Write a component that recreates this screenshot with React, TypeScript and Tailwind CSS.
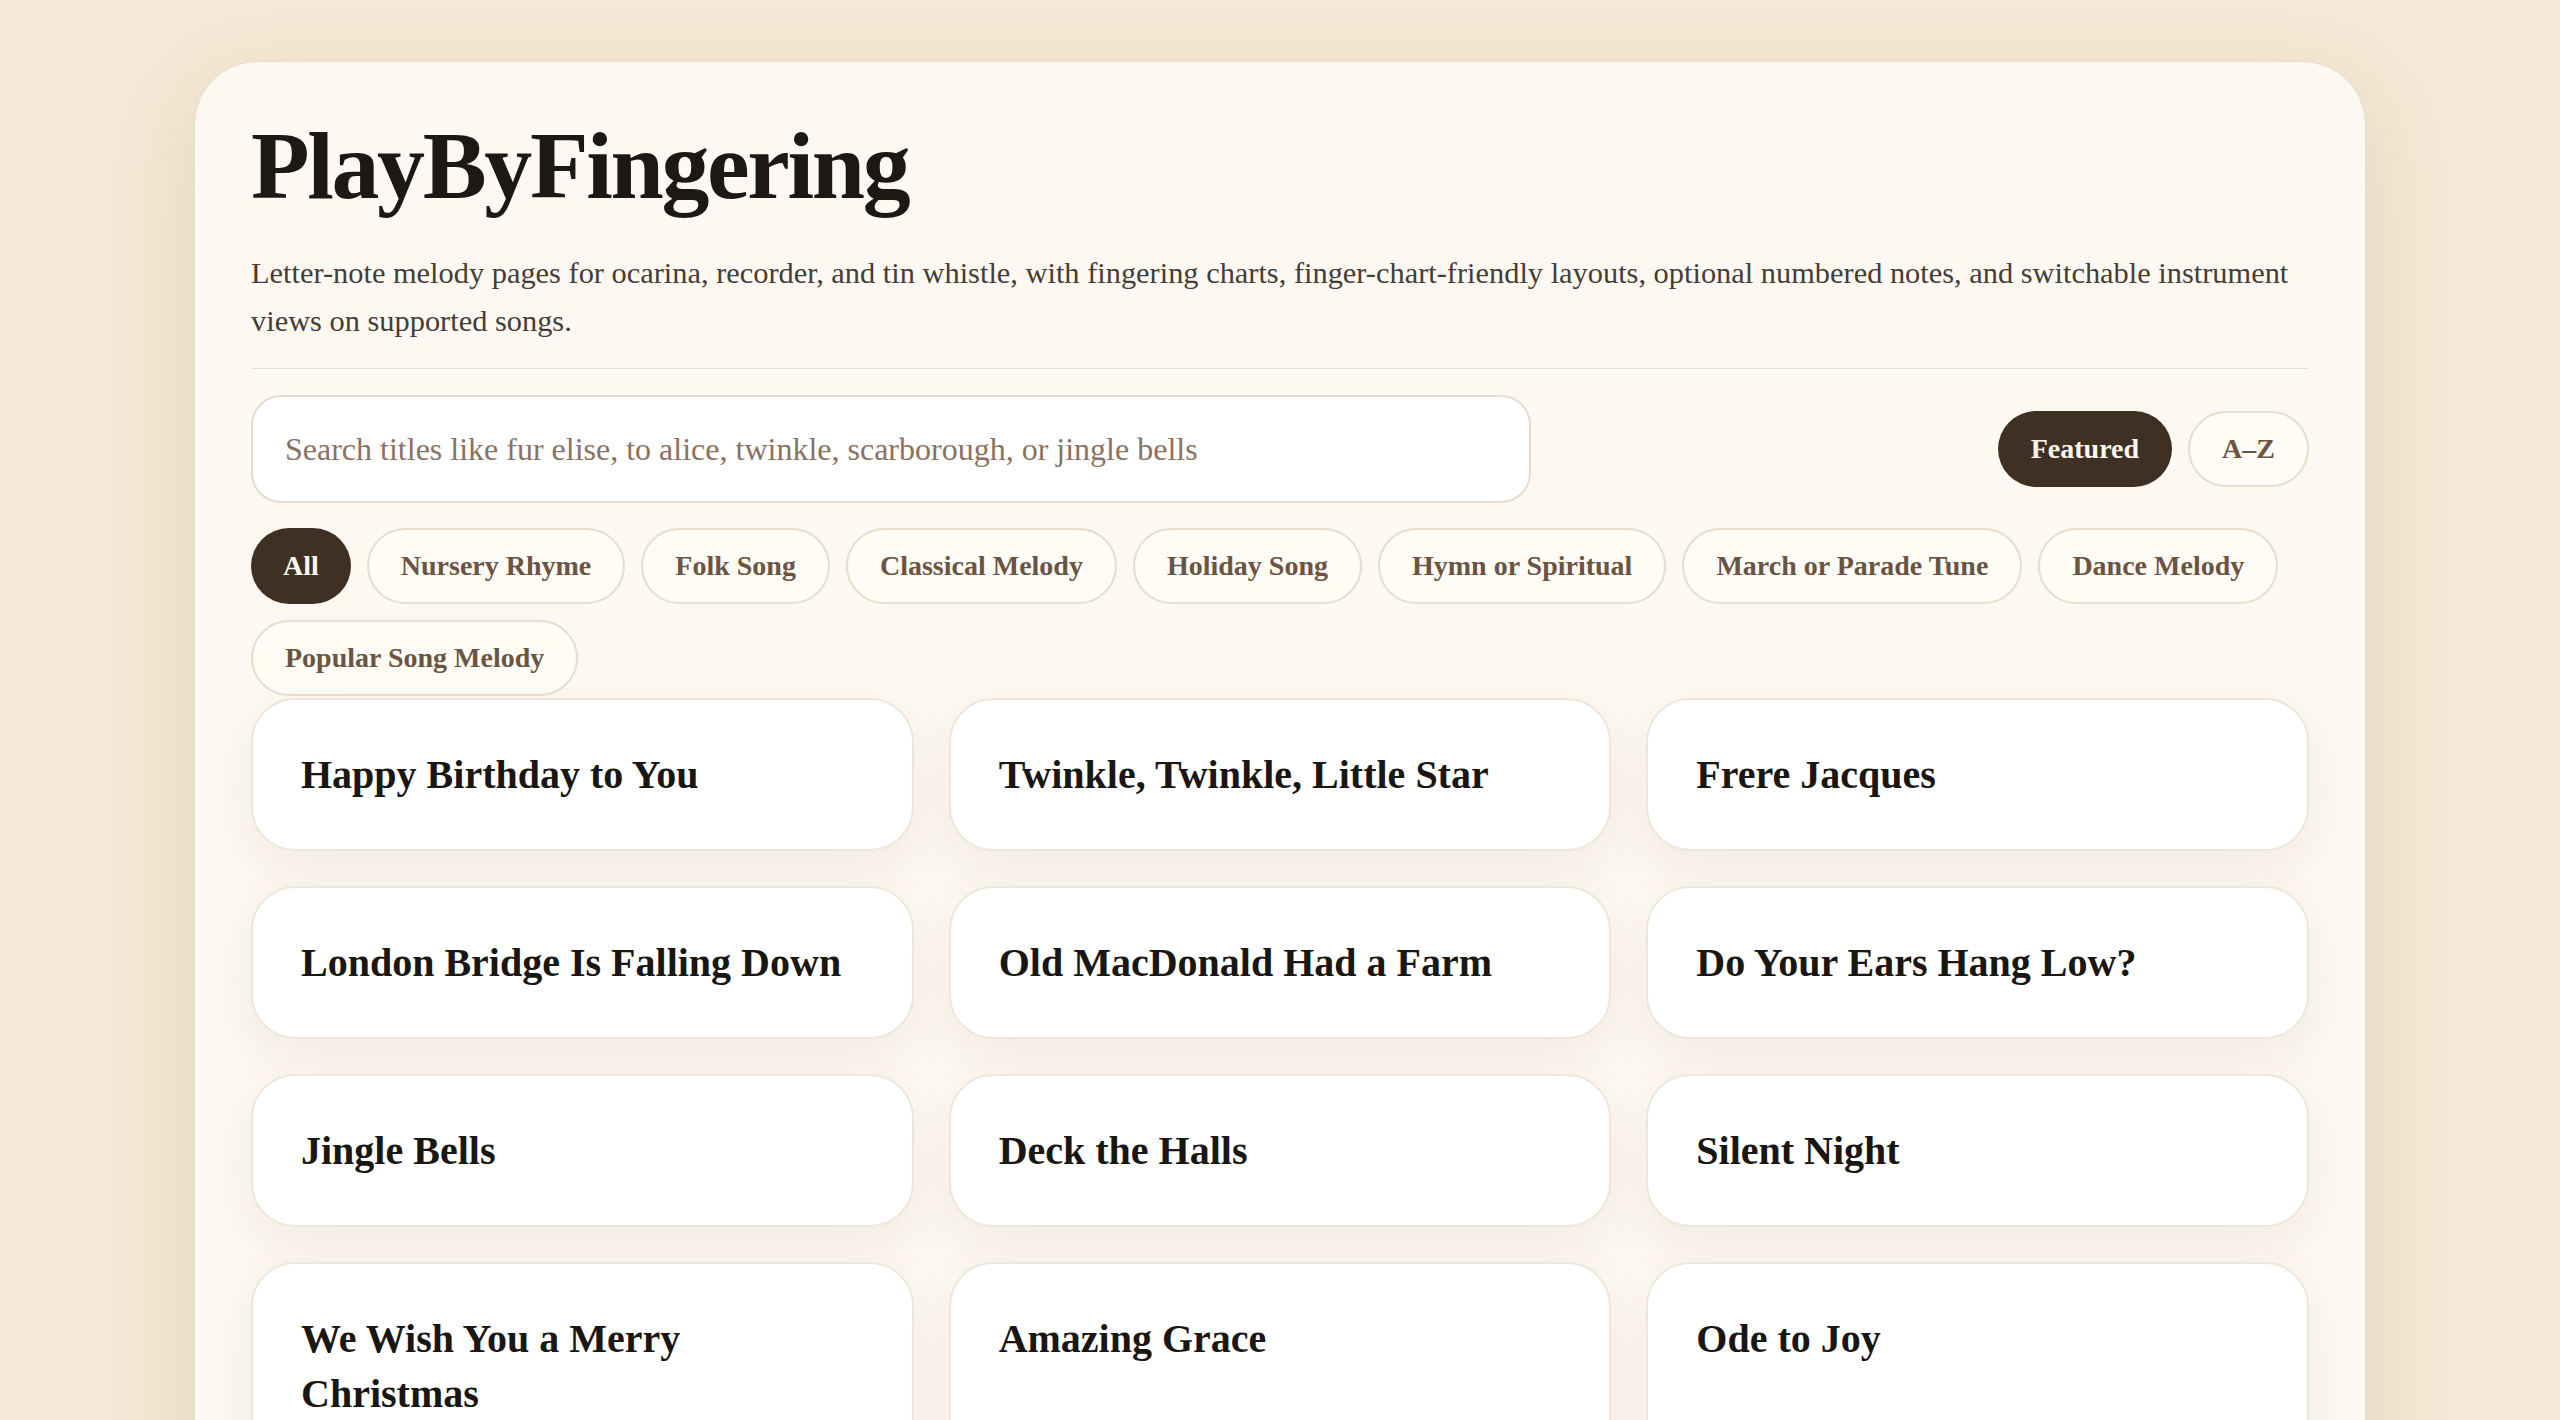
import { useState } from "react"

const categories = [
  "All",
  "Nursery Rhyme",
  "Folk Song",
  "Classical Melody",
  "Holiday Song",
  "Hymn or Spiritual",
  "March or Parade Tune",
  "Dance Melody",
  "Popular Song Melody",
]

const songs = [
  "Happy Birthday to You",
  "Twinkle, Twinkle, Little Star",
  "Frere Jacques",
  "London Bridge Is Falling Down",
  "Old MacDonald Had a Farm",
  "Do Your Ears Hang Low?",
  "Jingle Bells",
  "Deck the Halls",
  "Silent Night",
  "We Wish You a Merry Christmas",
  "Amazing Grace",
  "Ode to Joy",
]

export default function App() {
  const [sort, setSort] = useState<"featured" | "az">("featured")
  const [category, setCategory] = useState("All")

  return (
    <div className="min-h-screen bg-[#f4e9d6] px-[194px] pt-[61px] pb-16 font-['Liberation_Serif','Times_New_Roman',serif]">
      <main className="rounded-[64px] border border-[#eadfcd] bg-[#fdf9f2] px-14 pt-[56px] pb-16 shadow-[0_30px_90px_rgba(120,88,40,0.14)]">
        {/* Header */}
        <h1 className="text-[96px] font-bold leading-none tracking-[-0.025em] text-[#1c1814]">
          PlayByFingering
        </h1>
        <p className="mt-[35px] text-[30.4px] leading-[48px] text-[#453d36]">
          Letter-note melody pages for ocarina, recorder, and tin whistle, with fingering charts,
          finger-chart-friendly layouts, optional numbered notes, and switchable instrument views on
          supported songs.
        </p>
        <div className="mt-[23px] h-px bg-[#ebe1d2]" />

        {/* Search + sort */}
        <div className="mt-[26px] flex items-center justify-between">
          <input
            type="text"
            placeholder="Search titles like fur elise, to alice, twinkle, scarborough, or jingle bells"
            className="h-[108px] w-[1280px] rounded-[30px] border-2 border-[#e6dccd] bg-white px-[32px] text-[32px] text-[#3a2f25] placeholder:text-[#8a7262] outline-none"
          />
          <div className="flex gap-4">
            <button
              onClick={() => setSort("featured")}
              className={`h-[76px] rounded-full px-[33px] text-[28px] font-bold ${
                sort === "featured"
                  ? "bg-[#3f3024] text-[#fdf8ef]"
                  : "border-2 border-[#e8dccb] bg-[#fffcf6] text-[#6b5442]"
              }`}
            >
              Featured
            </button>
            <button
              onClick={() => setSort("az")}
              className={`h-[76px] rounded-full px-[32px] text-[28px] font-bold ${
                sort === "az"
                  ? "bg-[#3f3024] text-[#fdf8ef]"
                  : "border-2 border-[#e8dccb] bg-[#fffcf6] text-[#6b5442]"
              }`}
            >
              A–Z
            </button>
          </div>
        </div>

        {/* Categories */}
        <div className="mt-[25px] flex flex-wrap gap-4">
          {categories.map((c) => (
            <button
              key={c}
              onClick={() => setCategory(c)}
              className={`h-[76px] rounded-full px-[32px] text-[28px] font-bold ${
                category === c
                  ? "bg-[#3f3024] text-[#fdf8ef]"
                  : "border-2 border-[#e8dccb] bg-[#fffcf6] text-[#6b5442]"
              }`}
            >
              {c}
            </button>
          ))}
        </div>

        {/* Songs */}
        <div className="mt-[2px] grid grid-cols-3 gap-[35px]">
          {songs.map((s) => (
            <a
              key={s}
              href="#"
              className="rounded-[44px] border-2 border-[#efe6da] bg-white px-[48px] py-[47px] shadow-[0_18px_50px_rgba(120,88,40,0.09)]"
            >
              <h2 className="text-[40px] font-bold leading-[55px] text-[#1a1612]">{s}</h2>
            </a>
          ))}
        </div>
      </main>
    </div>
  )
}
